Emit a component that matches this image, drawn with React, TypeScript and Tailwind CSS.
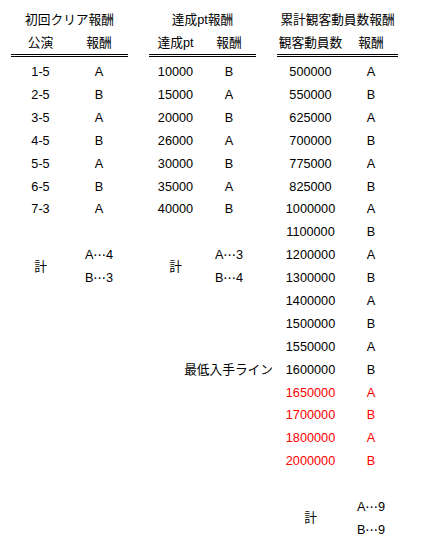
import React from "react";

const T1: [string, string][] = [
  ["1-5", "A"],
  ["2-5", "B"],
  ["3-5", "A"],
  ["4-5", "B"],
  ["5-5", "A"],
  ["6-5", "B"],
  ["7-3", "A"],
];
const T2: [string, string][] = [
  ["10000", "B"],
  ["15000", "A"],
  ["20000", "B"],
  ["26000", "A"],
  ["30000", "B"],
  ["35000", "A"],
  ["40000", "B"],
];
const T3: [string, string, boolean][] = [
  ["500000", "A", false],
  ["550000", "B", false],
  ["625000", "A", false],
  ["700000", "B", false],
  ["775000", "A", false],
  ["825000", "B", false],
  ["1000000", "A", false],
  ["1100000", "B", false],
  ["1200000", "A", false],
  ["1300000", "B", false],
  ["1400000", "A", false],
  ["1500000", "B", false],
  ["1550000", "A", false],
  ["1600000", "B", false],
  ["1650000", "A", true],
  ["1700000", "B", true],
  ["1800000", "A", true],
  ["2000000", "B", true],
];

const C = ({ children, red }: { children?: React.ReactNode; red?: boolean }) => (
  <div className={"flex items-center justify-center whitespace-nowrap " + (red ? "text-[#ff0000]" : "")}>
    {children}
  </div>
);

const Span2 = ({ children }: { children?: React.ReactNode }) => (
  <div className="row-span-2 flex items-center justify-center whitespace-nowrap">{children}</div>
);

const Tot = ({ l, n }: { l: string; n: string }) => (
  <div className="flex items-center justify-center whitespace-nowrap">
    {l}
    <span className="font-['Noto_Sans_CJK_JP',sans-serif]">…</span>
    {n}
  </div>
);

const H = ({ children }: { children?: React.ReactNode }) => (
  <div className="flex items-center justify-center whitespace-nowrap border-b-[3px] border-double border-black">
    {children}
  </div>
);

export default function App() {
  const rows: React.ReactNode[] = [];
  for (let r = 0; r < 21; r++) {
    // table 1
    if (r < 7) {
      rows.push(<C key={`a${r}`}>{T1[r][0]}</C>, <C key={`b${r}`}>{T1[r][1]}</C>);
    } else if (r === 8) {
      rows.push(<Span2 key={`a${r}`}>計</Span2>, <Tot key={`b${r}`} l="A" n="4" />);
    } else if (r === 9) {
      rows.push(<Tot key={`b${r}`} l="B" n="3" />);
    } else {
      rows.push(<C key={`a${r}`} />, <C key={`b${r}`} />);
    }
    // table 2 + gaps
    if (r === 13) {
      rows.push(<C key={`c${r}`} />);
      rows.push(
        <div key={`d${r}`} className="col-span-3 flex items-center justify-end whitespace-nowrap pr-[4px]">
          最低入手ライン
        </div>
      );
    } else {
      rows.push(<C key={`c${r}`} />);
      if (r < 7) {
        rows.push(<C key={`d${r}`}>{T2[r][0]}</C>, <C key={`e${r}`}>{T2[r][1]}</C>);
      } else if (r === 8) {
        rows.push(<Span2 key={`d${r}`}>計</Span2>, <Tot key={`e${r}`} l="A" n="3" />);
      } else if (r === 9) {
        rows.push(<Tot key={`e${r}`} l="B" n="4" />);
      } else {
        rows.push(<C key={`d${r}`} />, <C key={`e${r}`} />);
      }
      rows.push(<C key={`f${r}`} />);
    }
    // table 3
    if (r < 18) {
      rows.push(
        <C key={`g${r}`} red={T3[r][2]}>{T3[r][0]}</C>,
        <C key={`h${r}`} red={T3[r][2]}>{T3[r][1]}</C>
      );
    } else if (r === 19) {
      rows.push(<Span2 key={`g${r}`}>計</Span2>, <Tot key={`h${r}`} l="A" n="9" />);
    } else if (r === 20) {
      rows.push(<Tot key={`h${r}`} l="B" n="9" />);
    } else {
      rows.push(<C key={`g${r}`} />, <C key={`h${r}`} />);
    }
  }

  return (
    <div className="w-[422px] h-[557px] bg-white text-black text-[12.7px] leading-none font-['Liberation_Sans','Noto_Sans_CJK_JP',sans-serif] overflow-hidden">
      <div className="pl-[11px] pt-[9px]">
        <div className="grid grid-cols-[59px_58px_21px_53px_54px_21px_67px_54px] grid-rows-[23px_25px]">
          <div className="col-span-2 flex items-center justify-center whitespace-nowrap">初回クリア報酬</div>
          <div />
          <div className="col-span-2 flex items-center justify-center whitespace-nowrap">達成pt報酬</div>
          <div />
          <div className="col-span-2 flex items-center justify-center whitespace-nowrap">累計観客動員数報酬</div>
          <H>公演</H>
          <H>報酬</H>
          <div />
          <H>達成pt</H>
          <H>報酬</H>
          <div />
          <H>観客動員数</H>
          <H>報酬</H>
        </div>
        <div className="mt-[4px] grid grid-cols-[59px_58px_21px_53px_54px_21px_67px_54px] auto-rows-[22.9px]">
          {rows}
        </div>
      </div>
    </div>
  );
}
